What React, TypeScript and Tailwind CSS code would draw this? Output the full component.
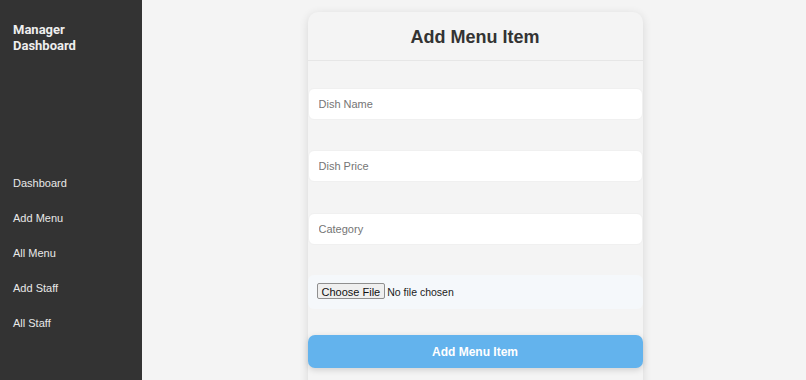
import React from 'react';

const NAV = ['Dashboard', 'Add Menu', 'All Menu', 'Add Staff', 'All Staff'];

function Sidebar() {
  return (
    <aside className="w-[142px] shrink-0 bg-[#333333] text-[#e6e6e6] flex flex-col">
      <h2 className="px-[13px] pt-[22px] text-[13px] leading-[16px] font-bold font-['Roboto',sans-serif] text-[#eeeeee]">
        Manager<br />Dashboard
      </h2>
      <ul className="mt-[123px] flex flex-col gap-[22px] px-[13px]">
        {NAV.map((item) => (
          <li key={item} className="text-[11px] leading-[13px] text-[#e8e8e8]">{item}</li>
        ))}
      </ul>
    </aside>
  );
}

function Field({ placeholder }: { placeholder: string }) {
  return (
    <input
      type="text"
      placeholder={placeholder}
      className="w-full h-[32px] rounded-[6px] bg-white px-[10px] text-[11px] text-[#333] placeholder:text-[#757575] outline-none border border-[#f0f0f0]"
    />
  );
}

export default function App() {
  return (
    <div className="flex h-[380px] overflow-hidden bg-[#f4f4f4] font-['Liberation_Sans',Arial,sans-serif]">
      <Sidebar />
      <main className="flex-1 flex justify-center pt-[12px]">
        <div className="w-[335px] h-[400px] ml-[2px] rounded-[10px] bg-[#f4f4f4] shadow-[0_2px_10px_rgba(0,0,0,0.12)] flex flex-col">
          <div className="h-[49px] pt-[2px] flex items-center justify-center border-b border-[#e6e6e6]">
            <h1 className="text-[18px] font-bold text-[#333333]">Add Menu Item</h1>
          </div>
          <form className="flex flex-col pt-[27px]" onSubmit={(e) => e.preventDefault()}>
            <Field placeholder="Dish Name" />
            <div className="h-[30px]" />
            <Field placeholder="Dish Price" />
            <div className="h-[31px]" />
            <Field placeholder="Category" />
            <div className="h-[30px]" />
            <div className="h-[34px] rounded-[6px] bg-[#f5f8fb] px-[9px] flex items-center">
              <input type="file" className="text-[10.5px] text-[#222] file:mr-[2px] file:px-[4px] file:py-0 file:h-[16px] file:text-[11px] file:border file:border-[#8f8f8f] file:rounded-[2px] file:bg-[#efefef] file:text-[#111]" />
            </div>
            <div className="h-[26px]" />
            <button className="h-[33px] rounded-[7px] bg-[#63b3ed] text-white text-[12px] font-bold shadow-[0_2px_6px_rgba(0,0,0,0.15)]">
              Add Menu Item
            </button>
          </form>
        </div>
      </main>
    </div>
  );
}
